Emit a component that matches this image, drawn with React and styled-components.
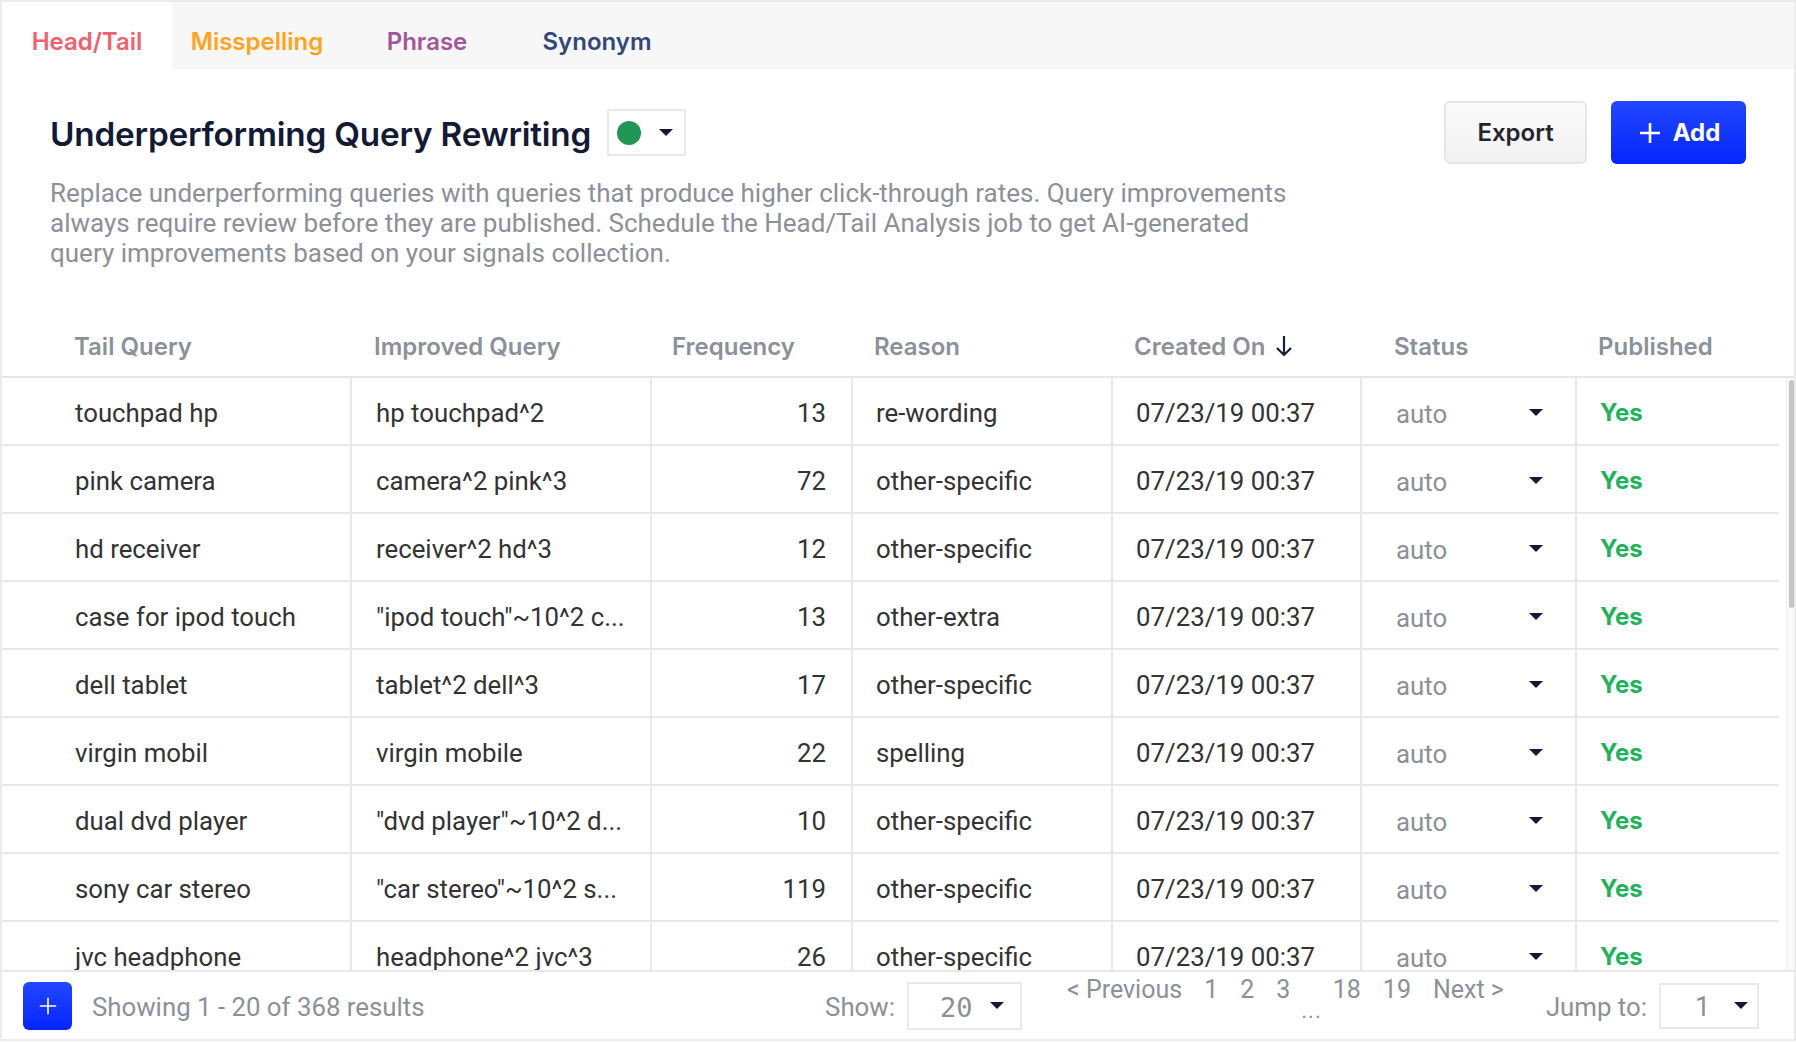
import React from "react";
import styled, { createGlobalStyle } from "styled-components";

const Global = createGlobalStyle`
  html, body {
    margin: 0;
    padding: 0;
    background: #ffffff;
  }
  body {
    font-family: Roboto, "Liberation Sans", sans-serif;
  }
  * {
    box-sizing: border-box;
  }
`;

const COLS = "348px 300px 201px 260px 249px 215px 1fr";

const Frame = styled.div`
  height: calc(100vh - 2px);
  border: 2px solid #ececec;
  display: flex;
  flex-direction: column;
  overflow: hidden;
`;

const TabBar = styled.nav`
  height: 67px;
  flex-shrink: 0;
  display: flex;
  background: #f7f7f7;
`;

const Tab = styled.div`
  width: 170px;
  padding-top: 12px;
  display: flex;
  align-items: center;
  justify-content: center;
  background: ${(p) => (p.$active ? "#ffffff" : "transparent")};
  color: ${(p) => p.$color};
  font-family: Inter, Roboto, sans-serif;
  font-weight: 600;
  font-size: 24px;
  cursor: pointer;
`;

const Intro = styled.section`
  flex-shrink: 0;
  padding: 32px 48px 0 48px;
`;

const TitleRow = styled.div`
  height: 63px;
  display: flex;
  align-items: center;
`;

const Title = styled.h1`
  margin: 0;
  padding-top: 2px;
  font-family: Inter, Roboto, sans-serif;
  font-weight: 600;
  font-size: 33.3px;
  letter-spacing: -0.2px;
  color: #131a35;
`;

const StatusPick = styled.div`
  margin-left: 16px;
  width: 79px;
  height: 47px;
  border: 2px solid #e9e9e9;
  display: flex;
  align-items: center;
  padding-left: 8px;
  gap: 18px;
`;

const Dot = styled.span`
  width: 24px;
  height: 24px;
  border-radius: 50%;
  background: #229656;
`;

const Caret = styled.span`
  width: 0;
  height: 0;
  border-left: 7px solid transparent;
  border-right: 7px solid transparent;
  border-top: 7px solid #141a35;
`;

const Spacer = styled.div`
  flex: 1;
`;

const ExportButton = styled.button`
  width: 143px;
  height: 63px;
  border: 2px solid #e6e6e6;
  border-radius: 6px;
  background: linear-gradient(#fbfbfb, #f1f1f1);
  font-family: Inter, Roboto, sans-serif;
  font-weight: 600;
  font-size: 24px;
  color: #23252d;
`;

const AddButton = styled.button`
  margin-left: 24px;
  width: 135px;
  height: 63px;
  border: none;
  border-radius: 6px;
  background: linear-gradient(#2247ff, #0525ff);
  display: flex;
  align-items: center;
  justify-content: center;
  gap: 12px;
  padding-right: 4px;
  font-family: Inter, Roboto, sans-serif;
  font-weight: 700;
  font-size: 24px;
  color: #ffffff;
`;

const Description = styled.p`
  margin: 14px 0 0 0;
  max-width: 1254px;
  font-size: 26px;
  line-height: 30px;
  color: #8b9099;
`;

const HeadRow = styled.div`
  margin-top: 42px;
  height: 68px;
  padding-top: 6px;
  flex-shrink: 0;
  display: grid;
  grid-template-columns: ${COLS};
  border-bottom: 2px solid #e6e6e6;
`;

const HeadCell = styled.div`
  display: flex;
  align-items: center;
  gap: 10px;
  padding-left: ${(p) => p.$pad}px;
  border-left: 2px solid transparent;
  font-family: Inter, Roboto, sans-serif;
  font-weight: 600;
  font-size: 24px;
  color: #8a9199;
`;

const BodyWrap = styled.div`
  flex: 1;
  min-height: 0;
  display: flex;
  overflow: hidden;
`;

const Rows = styled.div`
  width: 1777px;
  flex-shrink: 0;
`;

const Row = styled.div`
  height: 68px;
  display: grid;
  grid-template-columns: ${COLS};
  border-bottom: 2px solid #e8e8e8;
`;

const Cell = styled.div`
  display: flex;
  align-items: center;
  justify-content: ${(p) => p.$justify || "flex-start"};
  padding-top: 3px;
  padding-left: ${(p) => p.$pad || 0}px;
  padding-right: ${(p) => p.$padRight || 0}px;
  border-left: 2px solid ${(p) => (p.$first ? "transparent" : "#e8e8e8")};
  font-size: 25.8px;
  color: #333333;
  white-space: nowrap;
`;

const AutoText = styled.span`
  color: #8a9199;
  padding-top: 3px;
`;

const Yes = styled.span`
  font-family: Inter, Roboto, sans-serif;
  font-weight: 700;
  font-size: 24px;
  color: #1fb35b;
`;

const Track = styled.div`
  margin-left: auto;
  width: 8px;
  padding: 2px 1px 0 2px;
  border-left: 1px solid #ececec;
  background: #fafafa;
`;

const Thumb = styled.div`
  width: 5px;
  height: 228px;
  border-radius: 3px;
  background: #c4c4c4;
`;

const Footer = styled.footer`
  height: 69px;
  flex-shrink: 0;
  border-top: 2px solid #e8e8e8;
  display: flex;
  align-items: center;
  padding: 0 35px 0 21px;
  font-size: 25.8px;
  color: #8a9199;
`;

const PlusBox = styled.button`
  width: 49px;
  height: 48px;
  border: none;
  border-radius: 6px;
  background: linear-gradient(#2247ff, #0525ff);
  display: flex;
  align-items: center;
  justify-content: center;
`;

const FooterText = styled.span`
  margin-left: ${(p) => p.$gap || 0}px;
  padding-top: 3px;
`;

const Select = styled.div`
  margin-left: 12px;
  width: ${(p) => p.$w}px;
  height: ${(p) => p.$h}px;
  border: 2px solid #e9e9e9;
  display: flex;
  align-items: center;
  padding-left: ${(p) => p.$pad}px;
  gap: ${(p) => p.$gap}px;
`;

const MonoValue = styled.span`
  font-family: "DejaVu Sans Mono", "Liberation Mono", monospace;
  font-size: 27px;
  color: #8a9199;
  padding-top: 4px;
`;

const PlainValue = styled.span`
  font-size: 27px;
  color: #8a9199;
  padding-top: 2px;
`;

const Pager = styled.div`
  align-self: flex-start;
  margin-left: 45px;
  padding-top: 3px;
  display: flex;
  align-items: flex-start;
  font-size: 25px;
  line-height: 30px;
`;

const PageItem = styled.span`
  padding: 0 11px;
  &:first-child {
    padding-left: 0;
  }
  &:last-child {
    padding-right: 0;
  }
`;

const Ellipsis = styled.span`
  margin-top: 21px;
  font-size: 22px;
  letter-spacing: 1px;
`;

const rows = [
  ["touchpad hp", "hp touchpad^2", "13", "re-wording"],
  ["pink camera", "camera^2 pink^3", "72", "other-specific"],
  ["hd receiver", "receiver^2 hd^3", "12", "other-specific"],
  ["case for ipod touch", "\"ipod touch\"~10^2 c...", "13", "other-extra"],
  ["dell tablet", "tablet^2 dell^3", "17", "other-specific"],
  ["virgin mobil", "virgin mobile", "22", "spelling"],
  ["dual dvd player", "\"dvd player\"~10^2 d...", "10", "other-specific"],
  ["sony car stereo", "\"car stereo\"~10^2 s...", "119", "other-specific"],
  ["jvc headphone", "headphone^2 jvc^3", "26", "other-specific"],
];

const tabs = [
  { label: "Head/Tail", color: "#f2606d", active: true },
  { label: "Misspelling", color: "#ffa41c" },
  { label: "Phrase", color: "#a4569b" },
  { label: "Synonym", color: "#33487a" },
];

const headers = [
  { label: "Tail Query", pad: 70 },
  { label: "Improved Query", pad: 22 },
  { label: "Frequency", pad: 20 },
  { label: "Reason", pad: 21 },
  { label: "Created On", pad: 21, sort: true },
  { label: "Status", pad: 32 },
  { label: "Published", pad: 21 },
];

function Plus({ size, stroke }) {
  return (
    <svg width={size} height={size} viewBox="0 0 22 22">
      <path d="M11 1v20M1 11h20" stroke="#fff" strokeWidth={stroke} fill="none" />
    </svg>
  );
}

function DownArrow() {
  return (
    <svg width="18" height="22" viewBox="0 0 18 22">
      <path d="M9 1v19M2 13l7 7 7-7" stroke="#1b2039" strokeWidth="2.2" fill="none" />
    </svg>
  );
}

export default function App() {
  return (
    <>
      <Global />
      <Frame>
        <TabBar>
          {tabs.map((t) => (
            <Tab key={t.label} $active={t.active} $color={t.color}>
              {t.label}
            </Tab>
          ))}
        </TabBar>

        <Intro>
          <TitleRow>
            <Title>Underperforming Query Rewriting</Title>
            <StatusPick>
              <Dot />
              <Caret />
            </StatusPick>
            <Spacer />
            <ExportButton>Export</ExportButton>
            <AddButton>
              <Plus size={22} stroke={2.6} />
              Add
            </AddButton>
          </TitleRow>
          <Description>
            Replace underperforming queries with queries that produce higher click-through rates. Query
            improvements always require review before they are published. Schedule the Head/Tail Analysis job
            to get AI-generated query improvements based on your signals collection.
          </Description>
        </Intro>

        <HeadRow>
          {headers.map((h) => (
            <HeadCell key={h.label} $pad={h.pad}>
              {h.label}
              {h.sort && <DownArrow />}
            </HeadCell>
          ))}
        </HeadRow>

        <BodyWrap>
          <Rows>
            {rows.map((r) => (
              <Row key={r[0]}>
                <Cell $first $pad={71}>{r[0]}</Cell>
                <Cell $pad={24}>{r[1]}</Cell>
                <Cell $justify="flex-end" $padRight={25}>{r[2]}</Cell>
                <Cell $pad={23}>{r[3]}</Cell>
                <Cell $pad={23}>07/23/19 00:37</Cell>
                <Cell $pad={34} $padRight={32} $justify="space-between">
                  <AutoText>auto</AutoText>
                  <Caret />
                </Cell>
                <Cell $pad={23}>
                  <Yes>Yes</Yes>
                </Cell>
              </Row>
            ))}
          </Rows>
          <Track>
            <Thumb />
          </Track>
        </BodyWrap>

        <Footer>
          <PlusBox>
            <Plus size={18} stroke={2} />
          </PlusBox>
          <FooterText $gap={20}>Showing 1 - 20 of 368 results</FooterText>
          <Spacer />
          <FooterText>Show:</FooterText>
          <Select $w={115} $h={48} $pad={31} $gap={18}>
            <MonoValue>20</MonoValue>
            <Caret />
          </Select>
          <Pager>
            <PageItem>&lt; Previous</PageItem>
            <PageItem>1</PageItem>
            <PageItem>2</PageItem>
            <PageItem>3</PageItem>
            <Ellipsis>...</Ellipsis>
            <PageItem>18</PageItem>
            <PageItem>19</PageItem>
            <PageItem>Next &gt;</PageItem>
          </Pager>
          <FooterText $gap={42}>Jump to:</FooterText>
          <Select $w={100} $h={46} $pad={34} $gap={24}>
            <PlainValue>1</PlainValue>
            <Caret />
          </Select>
        </Footer>
      </Frame>
    </>
  );
}
